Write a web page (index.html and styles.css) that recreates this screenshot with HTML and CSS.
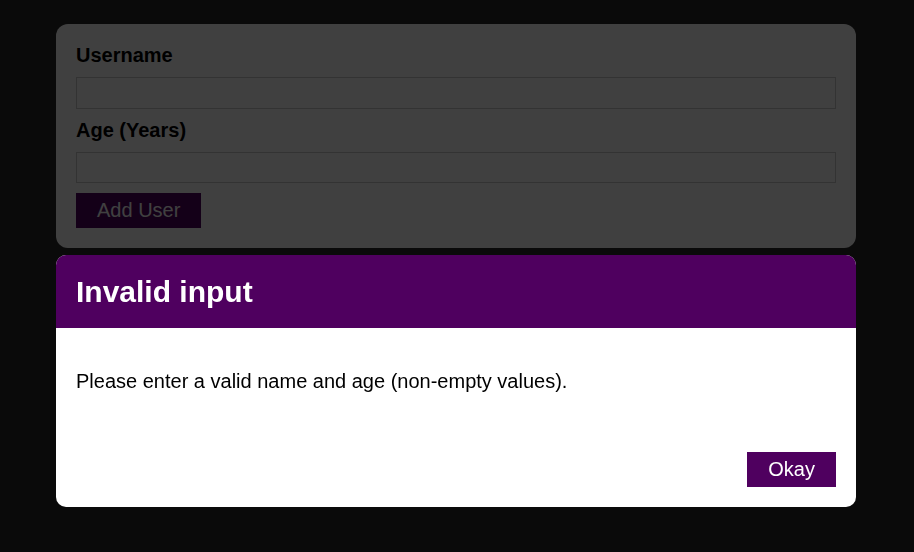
FILE: index.html
```html
<!DOCTYPE html>
<html lang="en">
<head>
<meta charset="utf-8">
<title>Add User</title>
<link rel="stylesheet" href="styles.css">
</head>
<body>
<div class="page">
  <form class="card">
    <label class="label" for="username">Username</label>
    <input class="field" id="username" type="text">
    <label class="label" for="age">Age (Years)</label>
    <input class="field" id="age" type="number">
    <button class="btn" type="button">Add User</button>
  </form>
</div>
<div class="backdrop"></div>
<div class="modal">
  <header class="modal-header"><h2 class="modal-title">Invalid input</h2></header>
  <div class="modal-content"><p class="modal-text">Please enter a valid name and age (non-empty values).</p></div>
  <footer class="modal-actions"><button class="btn" type="button">Okay</button></footer>
</div>
</body>
</html>
```
FILE: styles.css
```css
* { box-sizing: border-box; }
html, body { margin: 0; height: 100%; }
body {
  background: #282828;
  font-family: "Liberation Sans", Arial, sans-serif;
  font-size: 20px;
}
.page { padding-top: 24px; }
.card {
  width: 800px;
  margin-left: 56px;
  background: #fff;
  border-radius: 12px;
  padding: 20px;
  display: flex;
  flex-direction: column;
  align-items: flex-start;
}
.label {
  font-weight: bold;
  font-size: 20px;
  line-height: 23px;
  margin-bottom: 10px;
  color: #000;
}
.field {
  width: 100%;
  height: 31.5px;
  border: 1px solid #ccc;
  margin: 0 0 10px;
  font: inherit;
  padding: 0 4px;
  background: #fff;
}
.btn {
  font-family: inherit;
  font-size: 20px;
  line-height: 23px;
  border: 1px solid #4f005f;
  background: #4f005f;
  color: #fff;
  padding: 5px 20px;
  cursor: pointer;
}
.backdrop {
  position: fixed;
  inset: 0;
  background: rgba(0, 0, 0, 0.75);
}
.modal {
  position: fixed;
  top: 255px;
  left: 56px;
  width: 800px;
  background: #fff;
  border-radius: 10px;
  overflow: hidden;
}
.modal-header {
  background: #4f005f;
  padding: 19px 20px;
}
.modal-title {
  margin: 0;
  color: #fff;
  font-size: 30px;
  line-height: 35px;
  font-weight: bold;
}
.modal-content { padding: 22px 20px 19px; }
.modal-text {
  margin: 20px 0;
  line-height: 23px;
  color: #000;
}
.modal-actions {
  padding: 20px;
  display: flex;
  justify-content: flex-end;
}
```
